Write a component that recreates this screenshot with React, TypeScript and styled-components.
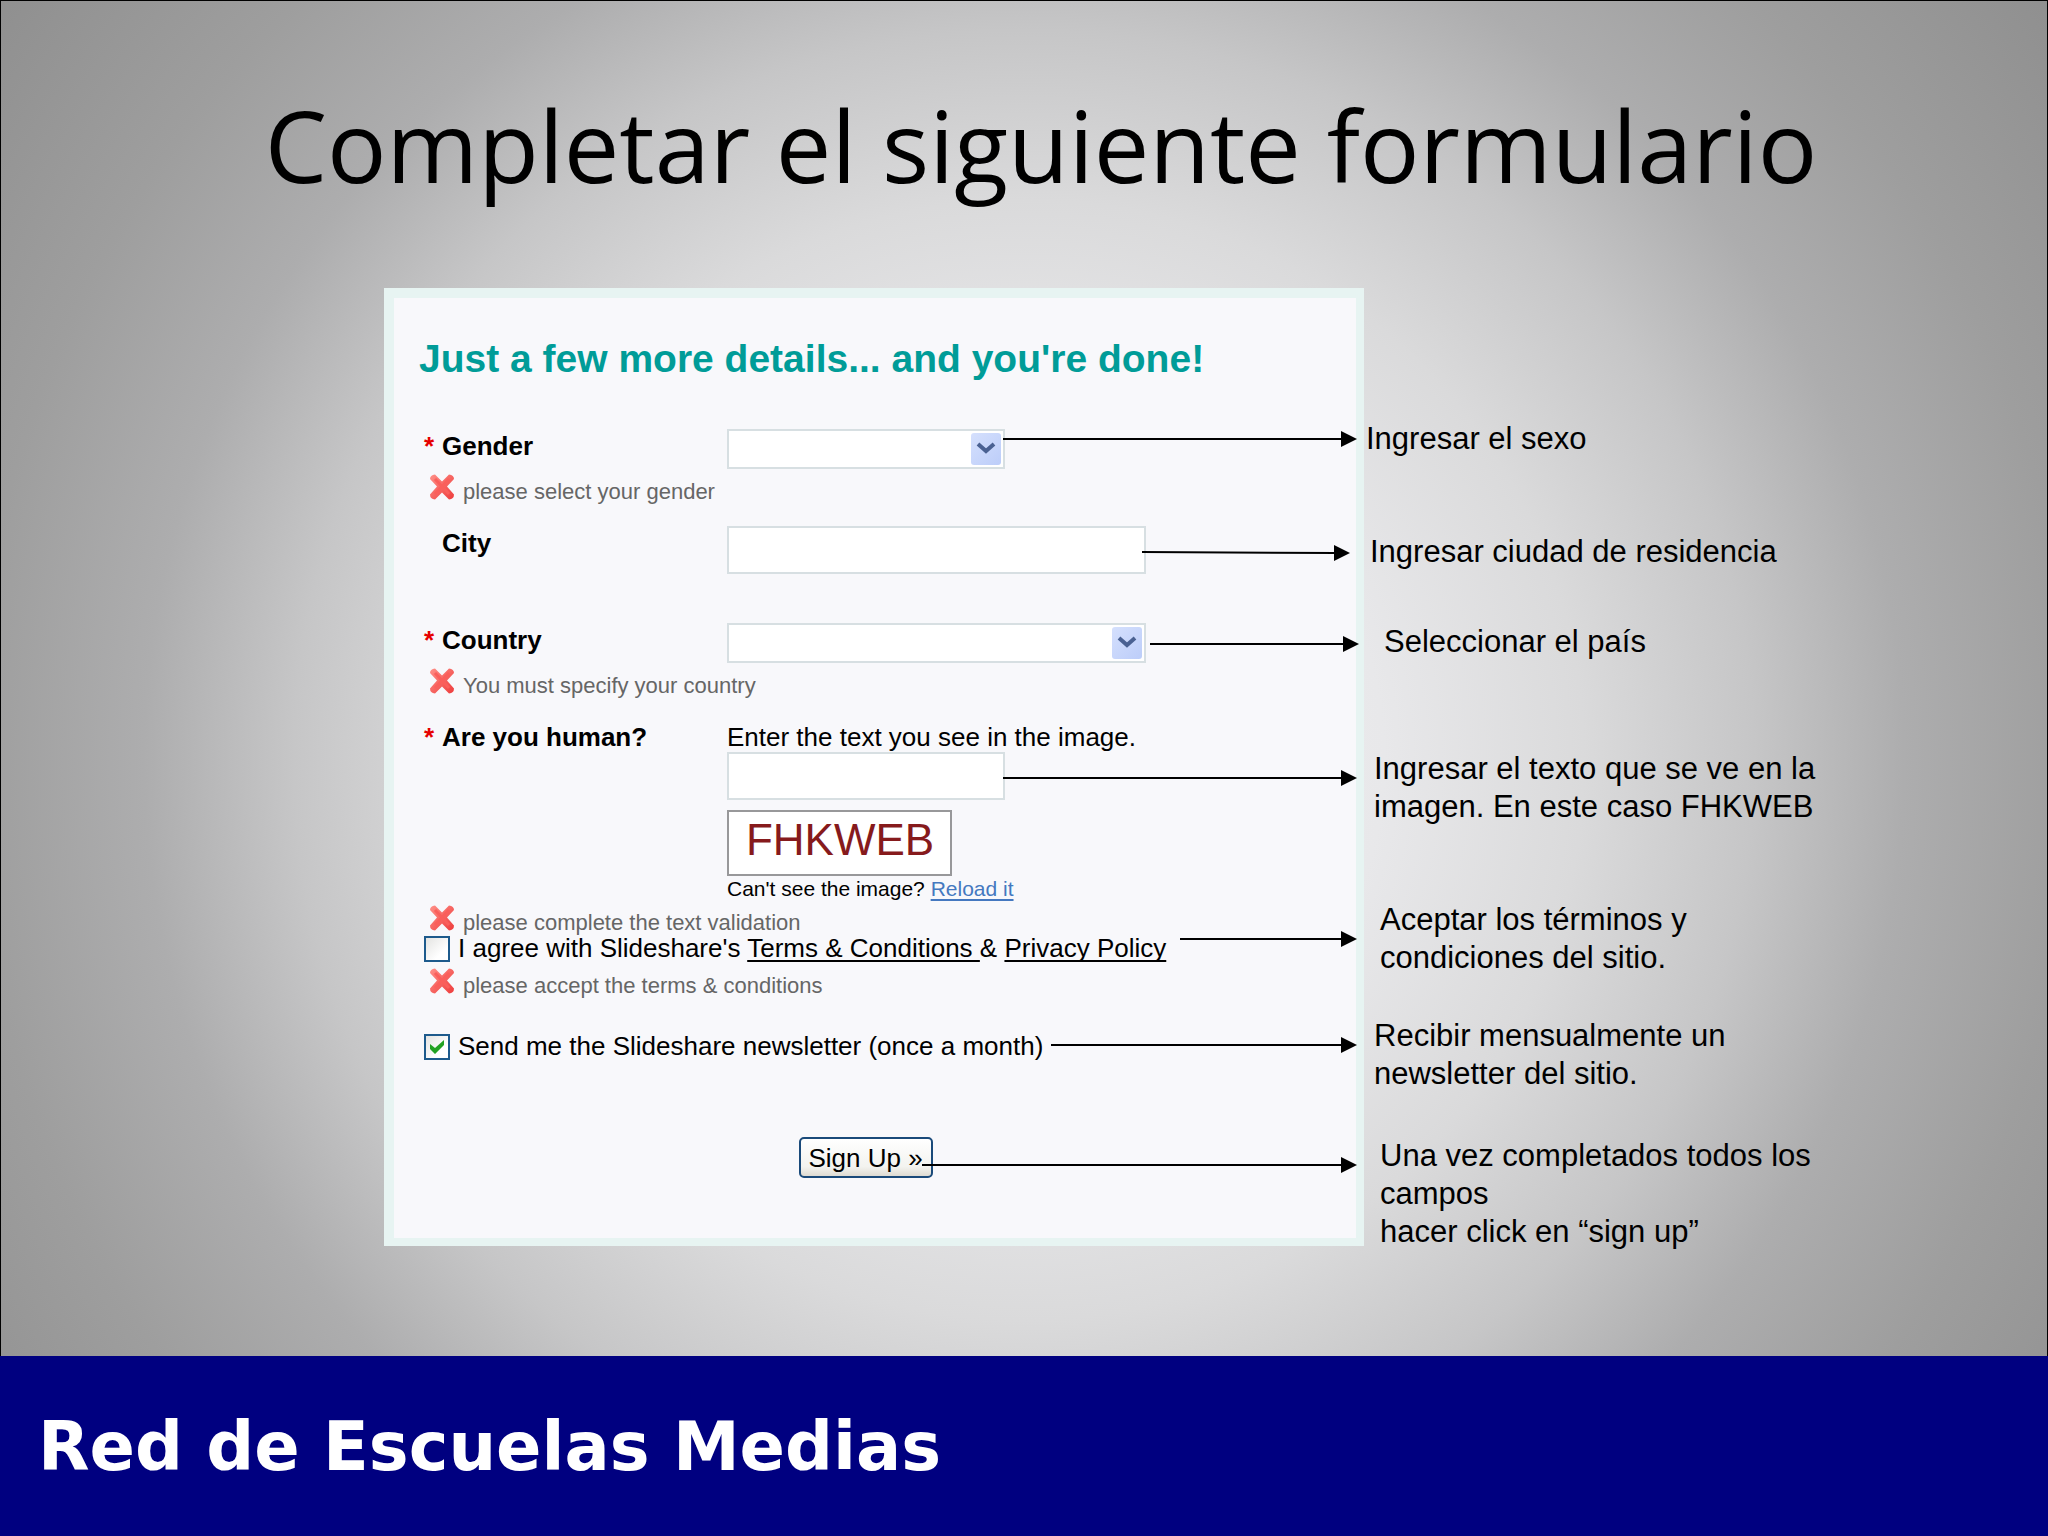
import React from 'react';
import styled, { createGlobalStyle } from 'styled-components';

const GlobalStyle = createGlobalStyle`
  *, *::before, *::after { box-sizing: border-box; }
  body { margin: 0; font-family: "Liberation Sans", Arial, sans-serif; color: #000; }
  h1, h2, p, ul { margin: 0; padding: 0; }
`;

const Slide = styled.div`
  display: flex;
  flex-direction: column;
  min-height: 100vh;
`;

const Stage = styled.main`
  flex: 1;
  border: 1px solid #000;
  border-bottom: 0;
  background: radial-gradient(
    circle at 50% 56%,
    #f4f4f5 0,
    #e8e8ea 360px,
    #dadadb 560px,
    #c6c6c7 730px,
    #adadae 880px,
    #9e9e9e 1050px,
    #8f8f8f 1280px
  );
`;

const Title = styled.h1`
  padding: 77px 0 0 34px;
  text-align: center;
  font: 400 99px/134px "Open Sans", "Noto Sans", sans-serif;
`;

const Board = styled.div`
  position: relative;
  display: grid;
  grid-template-columns: 980px 460px;
  width: max-content;
  margin: 76px auto 110px;
  padding-left: 160px;
`;

const Card = styled.section`
  padding: 38px 30px 60px;
  border: solid #e7f4f2;
  border-width: 10px 8px 8px 10px;
  background: #f8f8fb;
`;

const CardTitle = styled.h2`
  margin: 0 0 47px -5px;
  font-size: 39px;
  line-height: 46px;
  color: #009c98;
`;

const Field = styled.div`
  display: grid;
  grid-template-columns: 303px 1fr;
  align-content: start;
  min-height: 97px;
`;

const Label = styled.label`
  display: flex;
  font-size: 26px;
  font-weight: 700;
  line-height: 34px;
`;

const Mark = styled.span`
  width: 18px;
  color: #e60000;
`;

const Control = styled.div`
  display: flex;
  flex-direction: column;
  align-items: flex-start;
`;

const TextInput = styled.input<{ $wide?: boolean }>`
  width: ${(p) => (p.$wide ? 419 : 278)}px;
  height: 48px;
  padding: 0 8px;
  border: 2px solid #d7dfe2;
  background: #fff;
  font: 26px "Liberation Sans", Arial, sans-serif;
`;

const SelectBox = styled.div<{ $wide?: boolean }>`
  position: relative;
  width: ${(p) => (p.$wide ? 419 : 278)}px;
  height: 40px;
`;

const Select = styled.select`
  appearance: none;
  width: 100%;
  height: 100%;
  padding: 0 40px 0 8px;
  border: 2px solid #d7dfe2;
  border-radius: 0;
  background: #fff;
  font: 26px "Liberation Sans", Arial, sans-serif;
`;

const SelectArrow = styled.span`
  position: absolute;
  top: 4px;
  right: 4px;
  width: 30px;
  height: 32px;
  border-radius: 3px;
  background: linear-gradient(135deg, #d5e0fd, #bccdf9);
  pointer-events: none;
`;

const ErrorLine = styled.p`
  display: flex;
  align-items: flex-end;
  grid-column: 1 / -1;
  gap: 8px;
  height: 32px;
  margin-top: 4px;
  padding-left: 5px;
  font-size: 22px;
  line-height: 26px;
  color: #666;

  svg { align-self: flex-start; }
`;

const Hint = styled.label`
  height: 32px;
  font-size: 26px;
  line-height: 34px;
`;

const Captcha = styled.div`
  display: flex;
  justify-content: center;
  width: 225px;
  height: 66px;
  margin-top: 10px;
  border: 2px solid #98989a;
  background: #fff;
`;

const Small = styled.p`
  height: 24px;
  font-size: 21px;
  line-height: 26px;
`;

const ReloadLink = styled.a`
  color: #4478c0;
  text-decoration-thickness: 2px;
  text-underline-offset: 3px;
`;

const CheckRow = styled.div<{ $gap?: number }>`
  display: flex;
  align-items: flex-start;
  gap: 8px;
  height: 27px;
  margin-top: ${(p) => p.$gap ?? 0}px;
  font-size: 26px;
  line-height: 24px;
  white-space: nowrap;
`;

const CheckBox = styled.span`
  position: relative;
  width: 26px;
  height: 26px;

  svg { position: absolute; top: 0; left: 0; pointer-events: none; }
`;

const CheckInput = styled.input`
  appearance: none;
  display: block;
  width: 26px;
  height: 26px;
  margin: 0;
  border: 2px solid #1d5a8c;
  background: linear-gradient(135deg, #e4e4e2, #fff 70%);
`;

const TermsLink = styled.a`
  color: inherit;
  text-decoration-thickness: 2px;
  text-underline-offset: 3px;
  text-decoration-skip-ink: none;
`;

const SubmitRow = styled.div`
  display: flex;
  justify-content: center;
  padding-right: 19px;
  margin-top: 76px;
`;

const Submit = styled.button`
  width: 134px;
  height: 41px;
  padding: 2px 0 0;
  border: 2px solid #1a4a7a;
  border-radius: 5px;
  background: linear-gradient(#fff, #f3f3ef 75%, #dedbd2);
  color: #000;
  font: 26px "Liberation Sans", Arial, sans-serif;
`;

const Notes = styled.ul`
  display: grid;
  grid-template-rows: 113px 90px 127px 151px 116px 120px auto;
  margin-top: 132px;
  padding-left: 2px;
  list-style: none;
  font-size: 31px;
  line-height: 38px;
`;

const Note = styled.li<{ $indent: number }>`
  height: 0;
  padding-left: ${(p) => p.$indent}px;
  white-space: pre-line;
`;

const Arrows = styled.svg`
  position: absolute;
  top: 0;
  left: 160px;
  pointer-events: none;
`;

const Footer = styled.footer`
  display: flex;
  align-items: center;
  height: 180px;
  padding: 2px 38px 0;
  background: #000080;
  color: #fff;
  font: 700 67px/80px "DejaVu Sans", Verdana, sans-serif;
`;

const CrossIcon = () => (
  <svg width="26" height="28" viewBox="0 0 26 28" aria-hidden="true">
    <defs>
      <linearGradient id="cross" x1="0" y1="0" x2="1" y2="1">
        <stop offset="0" stopColor="#ff9088" />
        <stop offset="1" stopColor="#ee3c3c" />
      </linearGradient>
    </defs>
    <path
      d="M6 1.500 13 8.500 20 1.500 Q25 2 25 6 L18 13.500 25 21.500 Q25 26 20 26.500 L13 19.500 6 26.500 Q1 26 1 21.500 L8 13.500 1 6 Q1 2 6 1.500Z"
      fill="url(#cross)"
    />
    <path d="M6 6 20 21M20 6 6 21" stroke="#fa5f5b" strokeWidth="3" fill="none" />
  </svg>
);

const Chevron = () => (
  <svg width="30" height="32" viewBox="0 0 30 32" aria-hidden="true">
    <path d="M7 11 15 18 23 11" fill="none" stroke="#4a6192" strokeWidth="4" />
  </svg>
);

const Tick = () => (
  <svg width="26" height="26" viewBox="0 0 26 26" aria-hidden="true">
    <path d="M6 10 11 14 20 6V11L11 20 6 15Z" fill="#21a121" />
  </svg>
);

const ErrorMessage = ({ children }: { children: React.ReactNode }) => (
  <ErrorLine>
    <CrossIcon />
    <span>{children}</span>
  </ErrorLine>
);

const Dropdown = ({ id, wide }: { id: string; wide?: boolean }) => (
  <SelectBox $wide={wide}>
    <Select id={id} defaultValue="">
      <option value="" />
    </Select>
    <SelectArrow>
      <Chevron />
    </SelectArrow>
  </SelectBox>
);

/* start x, start y, tip x, tip y, measured from the card's corner */
const arrows = [
  [619, 151, 973, 151],
  [758, 264, 966, 265],
  [766, 356, 975, 356],
  [619, 490, 973, 490],
  [796, 651, 973, 651],
  [667, 757, 973, 757],
  [538, 877, 973, 877],
];

const notes = [
  { indent: 0, text: 'Ingresar el sexo' },
  { indent: 4, text: 'Ingresar ciudad de residencia' },
  { indent: 18, text: 'Seleccionar el país' },
  { indent: 8, text: 'Ingresar el texto que se ve en la\nimagen. En este caso FHKWEB' },
  { indent: 14, text: 'Aceptar los términos y\ncondiciones del sitio.' },
  { indent: 8, text: 'Recibir mensualmente un\nnewsletter del sitio.' },
  { indent: 14, text: 'Una vez completados todos los\ncampos\nhacer click en “sign up”' },
];

export default function App() {
  return (
    <Slide>
      <GlobalStyle />
      <Stage>
        <Title>Completar el siguiente formulario</Title>
        <Board>
          <Card>
            <CardTitle>Just a few more details... and you're done!</CardTitle>
            <form onSubmit={(e) => e.preventDefault()}>
              <Field>
                <Label htmlFor="gender"><Mark>*</Mark>Gender</Label>
                <Dropdown id="gender" />
                <ErrorMessage>please select your gender</ErrorMessage>
              </Field>
              <Field>
                <Label htmlFor="city"><Mark />City</Label>
                <TextInput id="city" type="text" $wide />
              </Field>
              <Field>
                <Label htmlFor="country"><Mark>*</Mark>Country</Label>
                <Dropdown id="country" wide />
                <ErrorMessage>You must specify your country</ErrorMessage>
              </Field>
              <Field>
                <Label htmlFor="human"><Mark>*</Mark>Are you human?</Label>
                <Control>
                  <Hint htmlFor="human">Enter the text you see in the image.</Hint>
                  <TextInput id="human" type="text" />
                  <Captcha>
                    <svg width="221" height="62" viewBox="0 0 221 62" role="img" aria-label="FHKWEB">
                      <text
                        x="111"
                        y="43"
                        textAnchor="middle"
                        fontFamily="Liberation Sans, Arial, sans-serif"
                        fontSize="44"
                        fill="#861a1c"
                      >
                        FHKWEB
                      </text>
                    </svg>
                  </Captcha>
                  <Small>
                    Can't see the image? <ReloadLink href="#reload">Reload it</ReloadLink>
                  </Small>
                </Control>
                <ErrorMessage>please complete the text validation</ErrorMessage>
              </Field>
              <CheckRow>
                <CheckBox>
                  <CheckInput id="terms" type="checkbox" />
                </CheckBox>
                <label htmlFor="terms">
                  I agree with Slideshare's <TermsLink href="#terms">Terms &amp; Conditions </TermsLink>
                  &amp; <TermsLink href="#privacy">Privacy Policy</TermsLink>
                </label>
              </CheckRow>
              <ErrorMessage>please accept the terms &amp; conditions</ErrorMessage>
              <CheckRow $gap={35}>
                <CheckBox>
                  <CheckInput id="newsletter" type="checkbox" defaultChecked />
                  <Tick />
                </CheckBox>
                <label htmlFor="newsletter">Send me the Slideshare newsletter (once a month)</label>
              </CheckRow>
              <SubmitRow>
                <Submit type="submit">Sign Up »</Submit>
              </SubmitRow>
            </form>
          </Card>
          <Notes>
            {notes.map((n) => (
              <Note key={n.text} $indent={n.indent}>{n.text}</Note>
            ))}
          </Notes>
          <Arrows width="980" height="958" viewBox="0 0 980 958" aria-hidden="true">
            {arrows.map(([x1, y1, x2, y2]) => (
              <g key={y1}>
                <path d={`M${x1} ${y1}L${x2 - 14} ${y2}`} stroke="#000" strokeWidth="2" />
                <path d={`M${x2} ${y2}l-16 -8v16z`} />
              </g>
            ))}
          </Arrows>
        </Board>
      </Stage>
      <Footer>Red de Escuelas Medias</Footer>
    </Slide>
  );
}
